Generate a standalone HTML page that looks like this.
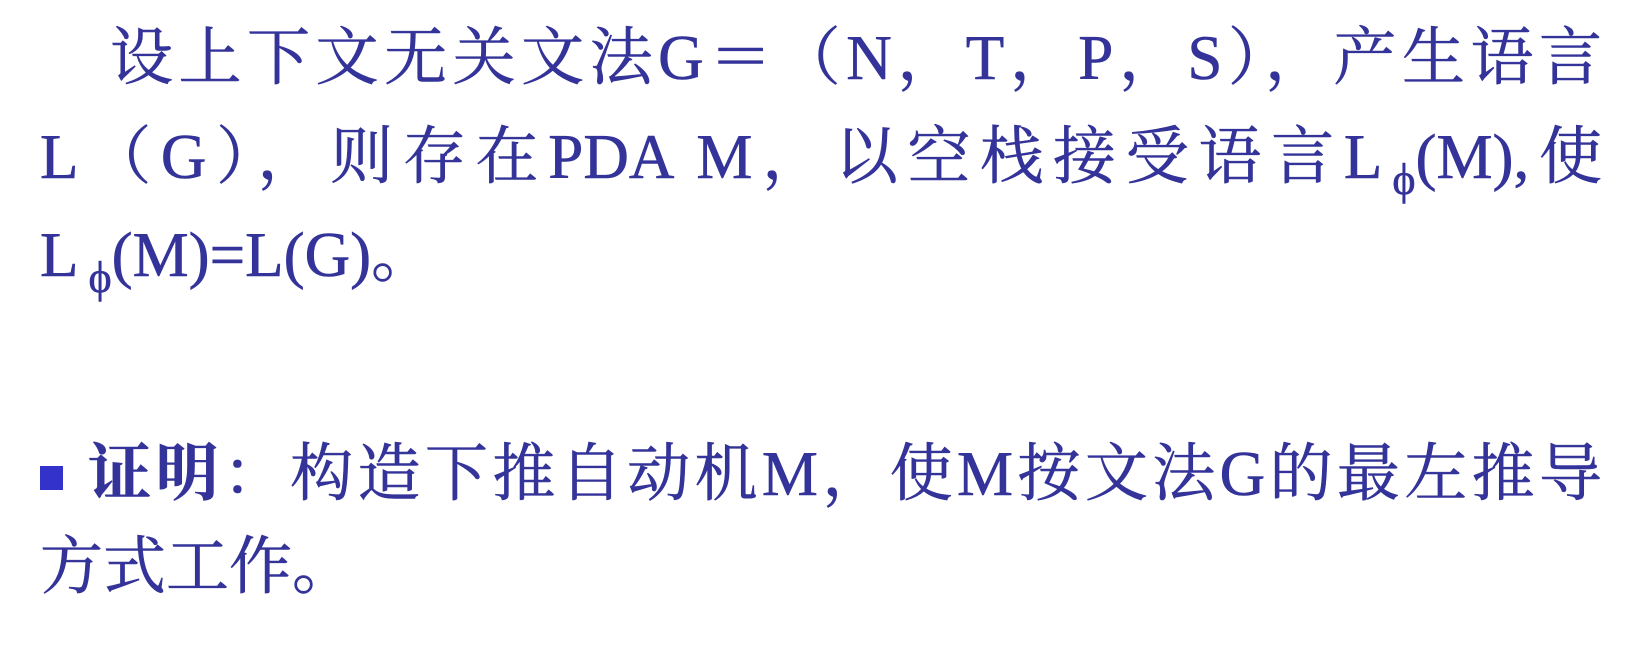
<!DOCTYPE html>
<html><head><meta charset="utf-8"><style>
html,body{margin:0;padding:0;background:#fff;}
body{width:1644px;height:648px;position:relative;overflow:hidden;
font-family:"Liberation Serif","Noto Serif CJK SC",serif;color:#333399;-webkit-text-stroke:0.6px #333399;}
.l{position:absolute;font-size:63px;line-height:63px;white-space:nowrap;}
.j{text-align:justify;text-align-last:justify;white-space:normal;}
sub{font-size:44px;vertical-align:-16px;line-height:0;margin-left:10px;}
.b{position:absolute;left:40px;top:466px;width:23px;height:24px;background:#3333cc;}
</style></head><body>
<div class="l j" style="left:110px;width:1492px;top:27px;">设上下文无关文法G＝（N，T，P，S），产生语言</div>
<div class="l j" style="left:40px;width:1562px;top:126px;">L（G），则存在PDA M，以空栈接受语言L<sub>ϕ</sub>(M),使</div>
<div class="l" style="left:40px;top:224px;">L<sub>ϕ</sub>(M)=L(G)。</div>
<div class="b"></div>
<div class="l j" style="left:88px;width:1514px;top:443px;"><b>证明</b>：构造下推自动机M，使M按文法G的最左推导</div>
<div class="l" style="left:40px;top:536px;">方式工作。</div>
</body></html>
